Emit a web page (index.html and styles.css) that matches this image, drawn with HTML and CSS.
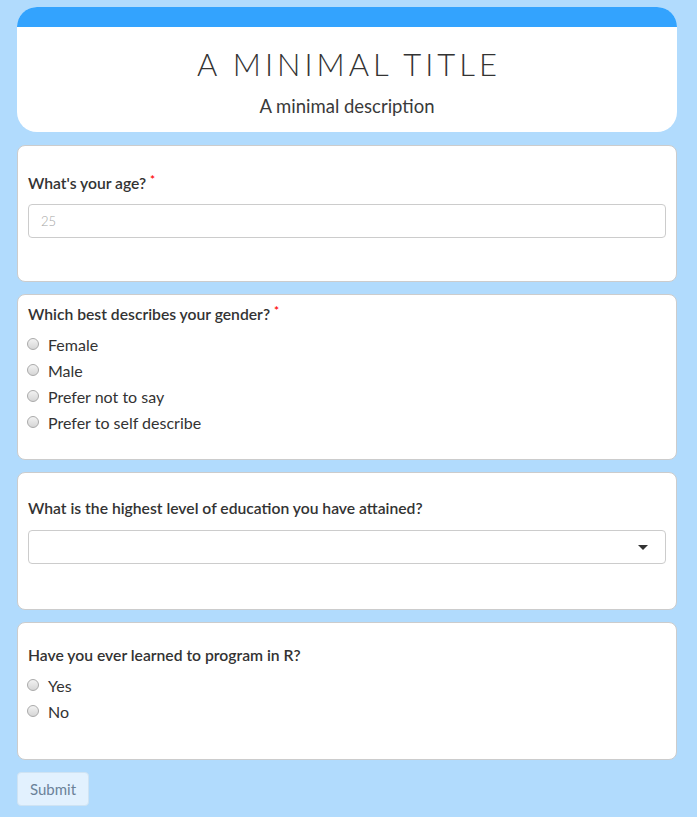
FILE: index.html
```html
<!DOCTYPE html>
<html>
<head>
<meta charset="utf-8">
<link rel="stylesheet" href="styles.css">
</head>
<body>
<main class="form">
  <header class="head-card">
    <div class="head-bar"></div>
    <h1 class="title">A MINIMAL TITLE</h1>
    <p class="desc">A minimal description</p>
  </header>

  <section class="card card-age">
    <label class="q">What's your age? <span class="req">*</span></label>
    <div class="input"><span class="ph">25</span></div>
  </section>

  <section class="card card-gender">
    <label class="q">Which best describes your gender? <span class="req">*</span></label>
    <ul class="opts">
      <li class="opt"><span class="radio"></span>Female</li>
      <li class="opt"><span class="radio"></span>Male</li>
      <li class="opt"><span class="radio"></span>Prefer not to say</li>
      <li class="opt"><span class="radio"></span>Prefer to self describe</li>
    </ul>
  </section>

  <section class="card card-edu">
    <label class="q">What is the highest level of education you have attained?</label>
    <div class="input select"><span class="caret"></span></div>
  </section>

  <section class="card card-r">
    <label class="q">Have you ever learned to program in R?</label>
    <ul class="opts">
      <li class="opt"><span class="radio"></span>Yes</li>
      <li class="opt"><span class="radio"></span>No</li>
    </ul>
  </section>

  <button class="submit">Submit</button>
</main>
</body>
</html>
```

FILE: styles.css
```css
html, body {
  margin: 0;
  padding: 0;
  background: #b1dbfd;
}
body {
  font-family: "Lato", "Open Sans", sans-serif;
  color: #333;
}
.form {
  width: 660px;
  margin: 0 0 0 17px;
  padding: 7px 0 12px 0;
  display: flex;
  flex-direction: column;
  gap: 12px;
}
.head-card {
  background: #fff;
  border-radius: 20px;
  overflow: hidden;
  height: 125px;
  margin-bottom: 1px;
  text-align: center;
}
.head-bar {
  height: 20px;
  background: #33a3fe;
}
.title {
  margin: 19px 0 0 0;
  font-weight: 300;
  font-size: 31px;
  line-height: 36px;
  letter-spacing: 4px;
  padding-left: 4px;
  color: #333;
}
.desc {
  margin: 12px 0 0 0;
  font-size: 18.5px;
  font-weight: 400;
  line-height: 24px;
  color: #3a3a3a;
}
.card {
  background: #fff;
  border: 1px solid #ccc;
  border-radius: 8px;
  padding: 0 10px;
  box-sizing: border-box;
}
.q {
  display: block;
  font-size: 15.7px;
  font-weight: 600;
  color: #333;
  line-height: 20px;
}
.req {
  color: #f00;
  font-size: 12px;
  vertical-align: top;
  line-height: 14px;
}
.input {
  height: 34px;
  border: 1px solid #ccc;
  border-radius: 4px;
  box-sizing: border-box;
  margin-top: 11px;
  padding: 0 12px;
  display: flex;
  align-items: center;
  justify-content: space-between;
}
.ph {
  color: #a5a5a5;
  font-size: 13px;
  font-weight: 300;
}
.caret {
  margin-left: auto;
  margin-right: 5px;
  width: 0;
  height: 0;
  border-left: 5px solid transparent;
  border-right: 5px solid transparent;
  border-top: 5px solid #333;
}
.card-age {
  height: 137px;
  padding-top: 27px;
}
.card-gender {
  height: 166px;
  padding-top: 9px;
}
.card-edu {
  height: 138px;
  padding-top: 25px;
}
.card-edu .input { margin-top: 12px; }
.card-r {
  height: 138px;
  padding-top: 22px;
}
.opts {
  list-style: none;
  margin: 7px 0 0 0;
  padding: 0;
}
.opt {
  display: flex;
  align-items: center;
  height: 26px;
  font-size: 16px;
  color: #333;
}
.radio {
  width: 12px;
  height: 12px;
  border-radius: 50%;
  border: 1px solid #aaa;
  background: linear-gradient(#f2f2f2, #d6d6d6);
  box-sizing: border-box;
  margin: 0 9px 0 -1px;
}
.submit {
  align-self: flex-start;
  width: 72px;
  height: 34px;
  background: #e2f1fe;
  border: 1px solid #cfe3f3;
  border-radius: 4px;
  font-family: inherit;
  font-size: 15px;
  color: #6b8299;
  padding: 0;
}
```
